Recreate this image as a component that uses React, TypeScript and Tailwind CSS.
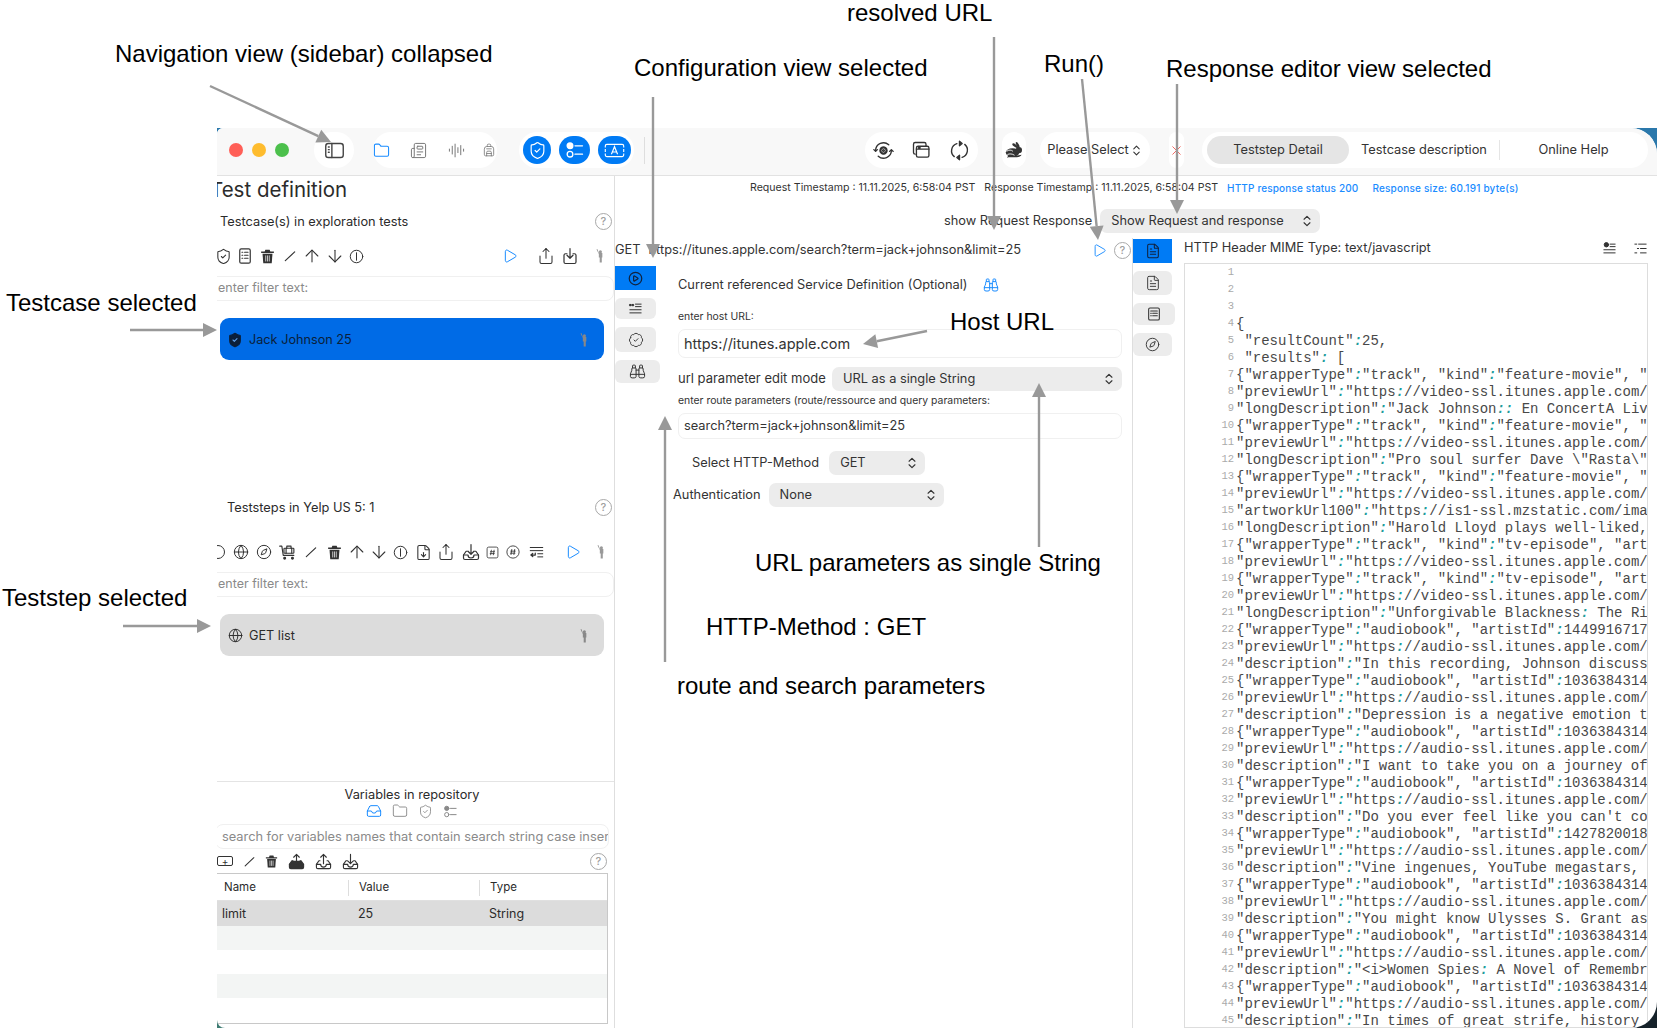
import type { ReactNode } from 'react';
import {
  ArrowDown, ArrowUp, AudioLines, Backpack, BadgeCheck, Binoculars, ChevronsUpDown, CirclePlay, Compass,
  FileDown, FileText, Folder, Globe, Inbox, Newspaper, Play, Share, ShieldCheck, X,
} from 'lucide-react';

type IconProps = { className?: string };

const Svg = ({ className = 'w-[17px] h-[17px]', children }: IconProps & { children: ReactNode }) => (
  <svg viewBox="0 0 24 24" fill="none" stroke="currentColor" strokeWidth={1.6} strokeLinecap="round" strokeLinejoin="round" className={className}>
    {children}
  </svg>
);

const SidebarIcon = ({ className }: IconProps) => (
  <Svg className={className}>
    <rect x="2" y="4" width="20" height="16" rx="3" />
    <path d="M9 4v16" />
    <path d="M5 8h1M5 11h1M5 14h1" />
  </Svg>
);
const CheckList = ({ className }: IconProps) => (
  <Svg className={className}>
    <circle cx="6" cy="7" r="3.4" fill="currentColor" />
    <circle cx="6" cy="17" r="3.4" />
    <path d="M12 7h9M12 17h9" />
  </Svg>
);
const TextBox = ({ className }: IconProps) => (
  <svg viewBox="0 0 30 24" fill="none" stroke="currentColor" strokeWidth={1.5} className={className}>
    <path d="M3 8V6a2 2 0 0 1 2-2h20a2 2 0 0 1 2 2v2M3 16v2a2 2 0 0 0 2 2h20a2 2 0 0 0 2-2v-2M3 10v4M27 10v4" />
    <path d="M11 17l4-10 4 10M12.5 14h5" />
  </svg>
);
const GearCycle = ({ className }: IconProps) => (
  <Svg className={className}>
    <circle cx="12" cy="12" r="3.5" strokeWidth={2.6} strokeDasharray="2 1" />
    <circle cx="12" cy="12" r="1" />
    <path d="M3 12a9 9 0 0 1 15-6.5M21 12a9 9 0 0 1-15 6.5" />
    <path d="M1 11l2 2 2-2M19 13l2-2 2 2" />
  </Svg>
);
const Windows = ({ className }: IconProps) => (
  <Svg className={className}>
    <path d="M5 17a2 2 0 0 1-2-2V5a2 2 0 0 1 2-2h11a2 2 0 0 1 2 2v2" />
    <rect x="6.5" y="7.5" width="15" height="13" rx="2" />
    <path d="M6.5 11h15M9 9.3h2" />
  </Svg>
);
const Cycle = ({ className }: IconProps) => (
  <Svg className={className}>
    <path d="M9 4.2A8.6 8.6 0 0 0 6 19M15 19.8A8.6 8.6 0 0 0 18 5" />
    <path d="M12 1.5v5L15 4zM12 17.5v5L9 20z" fill="currentColor" />
  </Svg>
);
// running hare, side view
const Hare = ({ className }: IconProps) => (
  <svg viewBox="0 0 24 24" className={className}>
    <ellipse cx="9.5" cy="14.5" rx="8.5" ry="5.5" fill="currentColor" />
    <circle cx="17.5" cy="11.5" r="4" fill="currentColor" />
    <ellipse cx="13" cy="6" rx="4.5" ry="1.7" transform="rotate(35 13 6)" fill="currentColor" />
    <ellipse cx="16" cy="5" rx="4" ry="1.5" transform="rotate(60 16 5)" fill="currentColor" />
    <path d="M21 17.5c-1 2-3 3-6 3H6c-2 0-4 .5-4 .5l2-2h8" fill="currentColor" />
    <path d="M2 13c3-2 6-2 8 0M3 17c3-1 6-1 9 1" stroke="#fff" strokeWidth={1.1} fill="none" />
  </svg>
);
const ListDoc = ({ className }: IconProps) => (
  <Svg className={className}>
    <rect x="5" y="2.5" width="14" height="19" rx="2" />
    <path d="M8 7h1M11.5 7H16M8 11h1M11.5 11H16M8 15h1M11.5 15H16" />
  </Svg>
);
const Trash = ({ className }: IconProps) => (
  <svg viewBox="0 0 24 24" className={className}>
    <path d="M3 5h18v2H3zM9 2.5h6l1 2.5H8z" fill="currentColor" />
    <path d="M5 8h14l-1 13.5H6z" fill="currentColor" />
    <path d="M9.5 10.5v8.5M12 10.5v8.5M14.5 10.5v8.5" stroke="#fff" strokeWidth={1} />
  </svg>
);
const Slash = ({ className }: IconProps) => (
  <Svg className={className}><path d="M4 20 20 5" strokeWidth={2} /></Svg>
);
const BarCircle = ({ className }: IconProps) => (
  <Svg className={className}><circle cx="12" cy="12" r="10" /><path d="M12 6v12" /></Svg>
);
const ShareDown = ({ className }: IconProps) => (
  <Svg className={className}>
    <path d="M8 9H6a2 2 0 0 0-2 2v9a2 2 0 0 0 2 2h12a2 2 0 0 0 2-2v-9a2 2 0 0 0-2-2h-2" />
    <path d="M12 2v13M8 11l4 4 4-4" />
  </Svg>
);
const Figure = ({ className = 'w-[14px] h-[16px]' }: IconProps) => (
  <svg viewBox="0 0 14 18" fill="currentColor" className={className}>
    <circle cx="7.5" cy="3.5" r="2" />
    <path d="M2.5 0.5 3.6 0l2 5h4.4v6H9.3v6.5H6.6V11H5.5V6.5z" />
  </svg>
);
const Cart = ({ className }: IconProps) => (
  <Svg className={className}>
    <path d="M1 3h3l2 13h15" />
    <rect x="7" y="6" width="14" height="7" rx="1" />
    <path d="M11 6V3h6v3M10 6v7M18 6v7" />
    <circle cx="8" cy="20" r="1.3" fill="currentColor" />
    <circle cx="19" cy="20" r="1.3" fill="currentColor" />
  </Svg>
);
const TrayArrow = ({ className, up, filled }: IconProps & { up?: boolean; filled?: boolean }) => (
  <Svg className={className}>
    <path d="M7 11H5.5L2 16v4a2 2 0 0 0 2 2h16a2 2 0 0 0 2-2v-4l-3.5-5H17" fill={filled ? 'currentColor' : 'none'} />
    <path d="M2 16h6a4 4 0 0 0 8 0h6" fill={filled ? 'currentColor' : 'none'} />
    {up ? <path d="M12 15V2M8 6l4-4 4 4" /> : <path d="M12 2v13M8 11l4 4 4-4" />}
  </Svg>
);
const HashBox = ({ className }: IconProps) => (
  <svg viewBox="0 0 24 24" fill="none" stroke="currentColor" strokeWidth={1.5} className={className}>
    <rect x="2" y="2" width="20" height="20" rx="3" />
    <path d="M10 7 8.5 17M15 7l-1.5 10M7.5 10.5h9M7 14h9" />
  </svg>
);
const HashCircle = ({ className }: IconProps) => (
  <svg viewBox="0 0 24 24" fill="none" stroke="currentColor" strokeWidth={1.5} className={className}>
    <circle cx="12" cy="12" r="10.5" />
    <path d="M10 7 8.5 17M15 7l-1.5 10M7.5 10.5h9M7 14h9" />
  </svg>
);
const InsertLines = ({ className }: IconProps) => (
  <Svg className={className}>
    <path d="M2 4h20M2 9h20M14 14h8M14 19h8" />
    <path d="M10 13v3H3M6 13.5 3 16l3 2.5" strokeWidth={2} />
  </Svg>
);
const QuoteLines = ({ className }: IconProps) => (
  <Svg className={className}>
    <path d="M3 5.5h2v2H3zM7 5.5h2v2H7z" fill="currentColor" />
    <path d="M12 5h9M12 9h9M3 14h18M3 19h18" />
  </Svg>
);
const Card = ({ className }: IconProps) => (
  <Svg className={className}>
    <rect x="4" y="3" width="16" height="18" rx="2" />
    <path d="M7 7.5h10M7 11h1M10 11h7M7 14.5h1M10 14.5h7" />
  </Svg>
);
const CheckLines = ({ className }: IconProps) => (
  <Svg className={className}>
    <circle cx="7" cy="6" r="3.5" fill="currentColor" />
    <path d="M13 5h8M13 9h8M3 14h18M3 19h18" />
  </Svg>
);
const IndentList = ({ className }: IconProps) => (
  <Svg className={className}><path d="M3 5h3M9 5h12M7 12h2M12 12h9M3 19h3M12 19h9" /></Svg>
);
const Help = ({ className = 'w-[16px] h-[16px]' }: IconProps) => (
  <span className={`flex items-center justify-center rounded-full border-[1.5px] border-[#a8a8a8] text-[11px] font-medium text-[#a0a0a0] ${className}`}>?</span>
);
const Cell = ({ w = 'w-[22.3px]', children }: { w?: string; children: ReactNode }) => (
  <span className={`flex shrink-0 items-center justify-center ${w}`}>{children}</span>
);

const lines = [
  '', '', '', '{', ' "resultCount":25,', ' "results": [',
  '{"wrapperType":"track", "kind":"feature-movie", "a',
  '"previewUrl":"https://video-ssl.itunes.apple.com/i',
  '"longDescription":"Jack Johnson:: En ConcertA Live',
  '{"wrapperType":"track", "kind":"feature-movie", "a',
  '"previewUrl":"https://video-ssl.itunes.apple.com/i',
  '"longDescription":"Pro soul surfer Dave \\"Rasta\\" ',
  '{"wrapperType":"track", "kind":"feature-movie", "a',
  '"previewUrl":"https://video-ssl.itunes.apple.com/i',
  '"artworkUrl100":"https://is1-ssl.mzstatic.com/image',
  '"longDescription":"Harold Lloyd plays well-liked, ',
  '{"wrapperType":"track", "kind":"tv-episode", "artist',
  '"previewUrl":"https://video-ssl.itunes.apple.com/i',
  '{"wrapperType":"track", "kind":"tv-episode", "artist',
  '"previewUrl":"https://video-ssl.itunes.apple.com/i',
  '"longDescription":"Unforgivable Blackness: The Rise',
  '{"wrapperType":"audiobook", "artistId":1449916717, ',
  '"previewUrl":"https://audio-ssl.itunes.apple.com/i',
  '"description":"In this recording, Johnson discusses',
  '{"wrapperType":"audiobook", "artistId":1036384314, ',
  '"previewUrl":"https://audio-ssl.itunes.apple.com/i',
  '"description":"Depression is a negative emotion tha',
  '{"wrapperType":"audiobook", "artistId":1036384314, ',
  '"previewUrl":"https://audio-ssl.itunes.apple.com/i',
  '"description":"I want to take you on a journey of ',
  '{"wrapperType":"audiobook", "artistId":1036384314, ',
  '"previewUrl":"https://audio-ssl.itunes.apple.com/i',
  '"description":"Do you ever feel like you can\'t con',
  '{"wrapperType":"audiobook", "artistId":1427820018, ',
  '"previewUrl":"https://audio-ssl.itunes.apple.com/i',
  '"description":"Vine ingenues, YouTube megastars, In',
  '{"wrapperType":"audiobook", "artistId":1036384314, ',
  '"previewUrl":"https://audio-ssl.itunes.apple.com/i',
  '"description":"You might know Ulysses S. Grant as ',
  '{"wrapperType":"audiobook", "artistId":1036384314, ',
  '"previewUrl":"https://audio-ssl.itunes.apple.com/i',
  '"description":"<i>Women Spies: A Novel of Remembran',
  '{"wrapperType":"audiobook", "artistId":1036384314, ',
  '"previewUrl":"https://audio-ssl.itunes.apple.com/i',
  '"description":"In times of great strife, history is',
];

// colons are highlighted in the editor
const CodeLine = ({ text }: { text: string }) => (
  <>
    {text.split(/(:)/).map((part, i) =>
      part === ':' ? <span key={i} className="font-bold italic text-[#1f9c9c]">:</span> : <span key={i}>{part}</span>
    )}
  </>
);

const arrows: [number, number, number, number][] = [
  [210, 86, 331, 142],
  [653, 97, 653, 258],
  [994, 37, 994, 230],
  [1082, 79, 1098, 240],
  [1177, 84, 1177, 214],
  [130, 330, 217, 330],
  [123, 626, 211, 626],
  [927, 331, 863, 344],
  [1039, 547, 1039, 383],
  [665, 662, 665, 416],
];

const Arrow = ({ from }: { from: [number, number, number, number] }) => {
  const [x1, y1, x2, y2] = from;
  const len = Math.hypot(x2 - x1, y2 - y1);
  const ux = (x2 - x1) / len;
  const uy = (y2 - y1) / len;
  const bx = x2 - ux * 14;
  const by = y2 - uy * 14;
  const pts = `${x2},${y2} ${bx - uy * 7},${by + ux * 7} ${bx + uy * 7},${by - ux * 7}`;
  return (
    <g>
      <line x1={x1} y1={y1} x2={bx} y2={by} stroke="#999" strokeWidth={2.4} />
      <polygon points={pts} fill="#999" />
    </g>
  );
};

const notes: [string, string][] = [
  ['resolved URL', 'left-[847px] top-[0px]'],
  ['Navigation view (sidebar) collapsed', 'left-[115px] top-[41px]'],
  ['Configuration view selected', 'left-[634px] top-[55px]'],
  ['Run()', 'left-[1044px] top-[51px]'],
  ['Response editor view selected', 'left-[1166px] top-[56px]'],
  ['Testcase selected', 'left-[6px] top-[290px]'],
  ['Teststep selected', 'left-[2px] top-[585px]'],
  ['Host URL', 'left-[950px] top-[309px]'],
  ['URL parameters as single String', 'left-[755px] top-[550px]'],
  ['HTTP-Method : GET', 'left-[706px] top-[614px]'],
  ['route and search parameters', 'left-[677px] top-[673px]'],
];

const Field = ({ className, children }: { className: string; children: ReactNode }) => (
  <div className={`flex items-center rounded-[7px] border border-[#f0f0f0] bg-white ${className}`}>{children}</div>
);

const Select = ({ className, label }: { className: string; label: string }) => (
  <div className={`flex items-center justify-between rounded-[7px] bg-[#ececec] pl-[11px] pr-[6px] text-[12.8px] text-[#333] ${className}`}>
    <span>{label}</span>
    <ChevronsUpDown className="h-[14px] w-[14px]" strokeWidth={2} />
  </div>
);

const ToolPill = ({ className, children }: { className: string; children: ReactNode }) => (
  <div className={`flex h-[36px] shrink-0 items-center rounded-[18px] bg-white ${className}`}>{children}</div>
);

const BlueCircle = ({ className, children }: { className: string; children: ReactNode }) => (
  <span className={`flex h-[28px] items-center justify-center rounded-full bg-[#007bf5] text-white ${className}`}>{children}</span>
);

const Toolbar = () => (
  <div className="flex h-[48px] shrink-0 items-center border-b border-[#e2e2e2] bg-[#f8f8f8] pb-[3px] text-[#444]">
    <span className="ml-[12px] h-[14px] w-[14px] rounded-full bg-[#ff5f57]" />
    <span className="ml-[9px] h-[14px] w-[14px] rounded-full bg-[#febc2e]" />
    <span className="ml-[9px] h-[14px] w-[14px] rounded-full bg-[#4cc04c]" />
    <ToolPill className="ml-[25px] w-[40px] justify-center"><SidebarIcon className="h-[21px] w-[21px]" /></ToolPill>
    <ToolPill className="ml-[19px] w-[124px] text-[#777]">
      <Folder className="h-[17px] w-[17px] text-[#1a8cff]" strokeWidth={1.5} />
      <Newspaper className="ml-[20px] h-[17px] w-[17px]" strokeWidth={1.4} />
      <AudioLines className="ml-[21px] h-[17px] w-[17px]" strokeWidth={1.4} />
      <Backpack className="ml-[17px] h-[18px] w-[14px]" strokeWidth={1.4} />
    </ToolPill>
    <ToolPill className="ml-[22px] w-[115px] gap-[8px] pl-[4px]">
      <BlueCircle className="w-[28px]"><ShieldCheck className="h-[19px] w-[19px]" strokeWidth={1.5} /></BlueCircle>
      <BlueCircle className="w-[31px]"><CheckList className="h-[20px] w-[20px]" /></BlueCircle>
      <BlueCircle className="w-[33px]"><TextBox className="h-[19px] w-[23px]" /></BlueCircle>
    </ToolPill>
    <span className="ml-[10px] h-[27px] w-px bg-[#dedede]" />
    <ToolPill className="ml-[220px] w-[113px] text-[#333]">
      <Cell w="w-[37px]"><GearCycle className="h-[21px] w-[21px]" /></Cell>
      <Cell w="w-[38px]"><Windows className="h-[20px] w-[20px]" /></Cell>
      <Cell w="w-[38px]"><Cycle className="h-[21px] w-[21px]" /></Cell>
    </ToolPill>
    <ToolPill className="ml-[24px] w-[24px] justify-center text-[#333]"><Hare className="h-[19px] w-[19px]" /></ToolPill>
    <ToolPill className="ml-[14px] w-[110px] justify-center gap-[1px] text-[12.8px] text-[#333]">
      Please Select<ChevronsUpDown className="h-[13px] w-[13px]" strokeWidth={2} />
    </ToolPill>
    <ToolPill className="ml-[19px] w-[15px] justify-center"><X className="h-[15px] w-[15px] text-[#f0554d]" strokeWidth={1.4} /></ToolPill>
    <ToolPill className="ml-[18px] w-[446px] text-[12.8px] text-[#333]">
      <span className="ml-[5px] flex h-[28px] w-[142px] items-center justify-center rounded-[14px] bg-[#e5e5e5]">Teststep Detail</span>
      <span className="w-[150px] text-center">Testcase description</span>
      <span className="h-[20px] w-px bg-[#e5e5e5]" />
      <span className="w-[147px] text-center">Online Help</span>
    </ToolPill>
  </div>
);

const ItemRow = ({ bg, icon, label, text }: { bg: string; icon: ReactNode; label: string; text: string }) => (
  <div className={`ml-[3px] mt-[17px] flex h-[42px] w-[384px] shrink-0 items-center rounded-[9px] pl-[4px] pt-[1px] text-[12.7px] ${bg} ${text}`}>
    <span className="flex w-[25px] justify-center pr-[3px]">{icon}</span>
    <span>{label}</span>
    <Figure className="ml-auto mr-[14px] h-[14px] w-[12px] text-[#888]" />
  </div>
);

const LeftPane = () => (
  <div className="flex w-[398px] shrink-0 flex-col overflow-hidden border-r border-[#dedede] text-[#2b2b2b]">
    <div className="-ml-[7px] h-[32px] shrink-0 pt-[1px] text-[20.5px] leading-[26px]">Test definition</div>
    <div className="flex h-[26px] shrink-0 items-center justify-between pl-[3px] pr-[2px] text-[12.8px]">
      <span className="mt-[2px]">Testcase(s) in exploration tests</span><Help className="h-[17px] w-[17px]" />
    </div>
    <div className="-ml-[5px] mt-[9px] flex h-[26px] shrink-0 items-center text-[#333]">
      <Cell><ShieldCheck className="h-[17px] w-[17px]" strokeWidth={1.5} /></Cell>
      <Cell><ListDoc className="h-[18px] w-[18px]" /></Cell>
      <Cell><Trash className="h-[17px] w-[17px]" /></Cell>
      <Cell><Slash className="h-[14px] w-[14px]" /></Cell>
      <Cell><ArrowUp className="h-[20px] w-[20px]" strokeWidth={1.3} /></Cell>
      <Cell><ArrowDown className="h-[20px] w-[20px]" strokeWidth={1.3} /></Cell>
      <Cell><BarCircle className="h-[15px] w-[15px]" /></Cell>
      <Cell w="w-[22px] ml-[131px]"><Play className="h-[16px] w-[16px] text-[#1a8cff]" strokeWidth={1.5} /></Cell>
      <Cell w="w-[22px] ml-[14px]"><Share className="h-[18px] w-[18px]" strokeWidth={1.4} /></Cell>
      <Cell w="w-[22px] ml-[2px]"><ShareDown className="h-[18px] w-[18px]" /></Cell>
      <Cell w="w-[14px] ml-[12px]"><Figure className="h-[14px] w-[12px] text-[#999]" /></Cell>
    </div>
    <Field className="-ml-[8px] mt-[7px] h-[25px] shrink-0 rounded-[8px] pl-[8px] text-[12.5px] text-[#8a8a8a]">enter filter text:</Field>
    <ItemRow bg="bg-[#006be6]" text="text-[#0b1f3a]" icon={<ShieldCheck className="h-[16px] w-[16px] fill-[#0b1f3a] text-[#0b1f3a] [&>path:last-child]:stroke-[#5f9fe8]" strokeWidth={1.6} />} label="Jack Johnson 25" />

    <div className="mt-[134px] flex h-[26px] shrink-0 items-center justify-between pl-[10px] pr-[2px] text-[12.8px]">
      <span className="mt-[2px]">Teststeps in Yelp US 5: 1</span><Help className="h-[17px] w-[17px]" />
    </div>
    <div className="-ml-[10px] mt-[19px] flex h-[26px] shrink-0 items-center text-[#333]">
      <Cell w="w-[22.5px]"><span className="h-[14px] w-[14px] rounded-full border-[1.5px] border-[#333]" /></Cell>
      <Cell w="w-[23px]"><Globe className="h-[16px] w-[16px]" strokeWidth={1.5} /></Cell>
      <Cell w="w-[23px]"><Compass className="h-[16px] w-[16px]" strokeWidth={1.5} /></Cell>
      <Cell w="w-[24px]"><Cart className="h-[17px] w-[17px]" /></Cell>
      <Cell w="w-[23px]"><Slash className="h-[14px] w-[14px]" /></Cell>
      <Cell w="w-[23px]"><Trash className="h-[17px] w-[17px]" /></Cell>
      <Cell w="w-[22px]"><ArrowUp className="h-[20px] w-[20px]" strokeWidth={1.3} /></Cell>
      <Cell w="w-[22px]"><ArrowDown className="h-[20px] w-[20px]" strokeWidth={1.3} /></Cell>
      <Cell w="w-[22px]"><BarCircle className="h-[15px] w-[15px]" /></Cell>
      <Cell w="w-[23px]"><FileDown className="h-[17px] w-[17px]" strokeWidth={1.5} /></Cell>
      <Cell w="w-[23px]"><Share className="h-[18px] w-[18px]" strokeWidth={1.4} /></Cell>
      <Cell w="w-[26px]"><TrayArrow className="h-[18px] w-[18px]" /></Cell>
      <Cell w="w-[18px]"><HashBox className="h-[13px] w-[13px]" /></Cell>
      <Cell w="w-[23px]"><HashCircle className="h-[14px] w-[14px]" /></Cell>
      <Cell w="w-[24px]"><InsertLines className="h-[15px] w-[15px]" /></Cell>
      <Cell w="w-[22px] ml-[13px]"><Play className="h-[16px] w-[16px] text-[#1a8cff]" strokeWidth={1.5} /></Cell>
      <Cell w="w-[14px] ml-[10px]"><Figure className="h-[14px] w-[12px] text-[#999]" /></Cell>
    </div>
    <Field className="-ml-[8px] mt-[7px] h-[25px] shrink-0 rounded-[8px] pl-[8px] text-[12.5px] text-[#8a8a8a]">enter filter text:</Field>
    <ItemRow bg="bg-[#dcdcdc]" text="text-[#2b2b2b]" icon={<Globe className="h-[15px] w-[15px]" strokeWidth={1.5} />} label="GET list" />

    <div className="mt-[125px] flex min-h-0 flex-1 flex-col border-t border-[#e4e4e4]">
      <div className="mt-[3px] h-[19px] shrink-0 pr-[7px] text-center text-[12.8px] leading-[20px]">Variables in repository</div>
      <div className="flex h-[14px] shrink-0 items-center justify-center gap-[10px] pr-[8px] text-[#8a8a8a]">
        <Inbox className="h-[16px] w-[16px] text-[#1a8cff]" strokeWidth={1.5} />
        <Folder className="h-[16px] w-[16px]" strokeWidth={1.4} />
        <ShieldCheck className="h-[15px] w-[15px]" strokeWidth={1.4} />
        <CheckList className="h-[15px] w-[15px]" />
      </div>
      <Field className="-ml-[2px] mt-[6px] h-[25px] w-[394px] shrink-0 overflow-hidden whitespace-nowrap rounded-[8px] pl-[6px] text-[12.8px] text-[#8a8a8a]">
        search for variables names that contain search string case inser
      </Field>
      <div className="mt-[2px] flex h-[20px] shrink-0 items-center text-[#333]">
        <Cell w="w-[16px]"><span className="flex h-[10px] w-[16px] items-center justify-center rounded-[2px] border border-[#333] text-[10px] leading-none">+</span></Cell>
        <Cell w="w-[26px] ml-[3px]"><Slash className="h-[13px] w-[13px]" /></Cell>
        <Cell w="w-[18px]"><Trash className="h-[15px] w-[15px]" /></Cell>
        <Cell w="w-[32px]"><TrayArrow up filled className="h-[17px] w-[17px]" /></Cell>
        <Cell w="w-[22px]"><TrayArrow up className="h-[17px] w-[17px]" /></Cell>
        <Cell w="w-[32px]"><TrayArrow className="h-[17px] w-[17px]" /></Cell>
        <Help className="ml-auto mr-[7px] h-[17px] w-[17px]" />
      </div>
      <div className="mt-[2px] h-[151px] w-[391px] shrink-0 border border-l-0 border-[#c8c8c8] text-[12px]">
        <div className="flex h-[27px] items-center border-b border-[#e0e0e0] pt-[2px] text-[11.5px]">
          <span className="w-[131px] pl-[7px]">Name</span>
          <span className="h-[16px] w-px bg-[#ddd]" />
          <span className="w-[130px] pl-[10px]">Value</span>
          <span className="h-[16px] w-px bg-[#ddd]" />
          <span className="pl-[10px]">Type</span>
        </div>
        <div className="flex h-[25px] items-center bg-[#dcdcdc] pt-[1px] text-[12.5px]">
          <span className="w-[132px] pl-[5px]">limit</span>
          <span className="w-[131px] pl-[9px]">25</span>
          <span className="pl-[9px]">String</span>
        </div>
        <div className="h-[24px] bg-[#f3f5f4]" />
        <div className="h-[24px]" />
        <div className="h-[24px] bg-[#f3f5f4]" />
      </div>
    </div>
  </div>
);

const MidPane = () => (
  <div className="flex w-[518px] shrink-0 flex-col border-r border-[#dedede] text-[#333]">
    <div className="flex h-[22px] shrink-0 items-center pt-[2px] text-[12.8px]">
      <span>GET</span>
      <span className="ml-[8px]">https://itunes.apple.com/search?term=jack+johnson&amp;limit=25</span>
      <Play className="ml-auto h-[15px] w-[15px] text-[#1a8cff]" strokeWidth={1.5} />
      <Help className="ml-[7px] mr-[1px] h-[17px] w-[17px]" />
    </div>
    <div className="mt-[6px] flex">
      <div className="flex w-[63px] shrink-0 flex-col">
        <span className="flex h-[24px] w-[41px] items-center justify-center bg-[#007bf5] text-[#10233f]"><CirclePlay className="h-[15px] w-[15px]" strokeWidth={2} /></span>
        <span className="mt-[8px] flex h-[21px] w-[41px] items-center justify-center rounded-[6px] bg-[#ececec]"><QuoteLines className="h-[15px] w-[15px]" /></span>
        <span className="mt-[8px] flex h-[25px] w-[41px] items-center justify-center rounded-[6px] bg-[#ececec]"><BadgeCheck className="h-[16px] w-[16px]" strokeWidth={1.4} /></span>
        <span className="mt-[8px] flex h-[23px] w-[45px] items-center justify-center rounded-[6px] bg-[#ececec]"><Binoculars className="h-[17px] w-[17px]" strokeWidth={1.4} /></span>
      </div>
      <div className="flex w-[444px] shrink-0 flex-col">
        <div className="mt-[9px] flex h-[20px] items-center text-[12.8px]">
          Current referenced Service Definition (Optional)
          <Binoculars className="ml-[15px] h-[16px] w-[16px] text-[#1a8cff]" strokeWidth={1.5} />
        </div>
        <div className="mt-[15px] h-[14px] text-[10.4px] leading-[14px]">enter host URL:</div>
        <Field className="mt-[5px] h-[29px] pl-[5px] text-[14.5px]">https://itunes.apple.com</Field>
        <div className="mt-[9px] flex h-[24px] items-center text-[13px]">
          url parameter edit mode
          <Select className="ml-auto h-[24px] w-[290px]" label="URL as a single String" />
        </div>
        <div className="mt-[3px] h-[14px] text-[10.4px] leading-[14px]">enter route parameters (route/ressource and query parameters:</div>
        <Field className="mt-[5px] h-[26px] pl-[5px] text-[12.8px]">search?term=jack+johnson&amp;limit=25</Field>
        <div className="ml-[14px] mt-[12px] flex h-[24px] items-center text-[12.8px]">
          Select HTTP-Method
          <Select className="ml-[10px] h-[24px] w-[96px]" label="GET" />
        </div>
        <div className="-ml-[5px] mt-[8px] flex h-[24px] items-center text-[12.8px]">
          Authentication
          <Select className="ml-[8px] h-[24px] w-[175px]" label="None" />
        </div>
      </div>
    </div>
  </div>
);

const RightPane = () => (
  <div className="flex min-w-0 flex-1 text-[#333]">
    <div className="flex w-[51px] shrink-0 flex-col pt-[1px]">
      <span className="flex h-[24px] w-[39px] items-center justify-center bg-[#007bf5] text-[#10233f]"><FileText className="h-[16px] w-[16px]" strokeWidth={1.6} /></span>
      <span className="mt-[8px] flex h-[24px] w-[39px] items-center justify-center rounded-[6px] bg-[#ececec]"><FileText className="h-[16px] w-[16px]" strokeWidth={1.4} /></span>
      <span className="mt-[8px] flex h-[22px] w-[42px] items-center justify-center rounded-[6px] bg-[#ececec]"><Card className="h-[16px] w-[16px]" /></span>
      <span className="mt-[8px] flex h-[23px] w-[39px] items-center justify-center rounded-[6px] bg-[#ececec]"><Compass className="h-[15px] w-[15px]" strokeWidth={1.5} /></span>
    </div>
    <div className="flex w-[464px] shrink-0 flex-col">
      <div className="flex h-[25px] shrink-0 items-center justify-between pb-[5px] text-[12.8px]">
        HTTP Header MIME Type: text/javascript
        <span className="flex gap-[16px]">
          <CheckLines className="h-[15px] w-[15px]" />
          <IndentList className="h-[15px] w-[15px]" />
        </span>
      </div>
      <div className="min-h-0 flex-1 overflow-hidden border border-[#dddddd] pt-[1px] font-['Liberation_Mono',monospace] text-[14px] leading-[17px] text-[#484848]">
        {lines.map((line, i) => (
          <div key={i} className="flex h-[17px] whitespace-pre">
            <span className="w-[49px] shrink-0 text-right text-[10.5px] leading-[15px] text-[#aaaaaa]">{i + 1}</span>
            <span className="ml-[2px]"><CodeLine text={line} /></span>
          </div>
        ))}
      </div>
    </div>
  </div>
);

export default function App() {
  return (
    <div className="relative h-[1028px] w-[1657px] overflow-hidden bg-white font-['Inter',sans-serif]">
      <div className="absolute left-[217px] top-[128px] h-[900px] w-[1440px] bg-[linear-gradient(to_bottom,#2b78ab_50%,transparent_50%),linear-gradient(to_right,#3d7b72_5%,#15222a_5%)]">
        <div className="flex h-full flex-col overflow-hidden rounded-bl-[8px] rounded-br-[26px] rounded-tl-[6px] rounded-tr-[26px] bg-white">
          <Toolbar />
          <div className="flex min-h-0 flex-1">
            <LeftPane />
            <div className="flex min-w-0 flex-1 flex-col">
              <div className="flex h-[24px] shrink-0 items-center pl-[135px] text-[10.6px] text-[#333]">
                <span>Request Timestamp : 11.11.2025, 6:58:04 PST</span>
                <span className="ml-[9px]">Response Timestamp : 11.11.2025, 6:58:04 PST</span>
                <span className="ml-[9px] text-[10px] font-medium tracking-[0.15px] text-[#1a8cff]">HTTP response status 200</span>
                <span className="ml-[14px] text-[10px] font-medium tracking-[0.2px] text-[#1a8cff]">Response size: 60.191 byte(s)</span>
              </div>
              <div className="mt-[9px] flex h-[24px] shrink-0 items-center pl-[329px] text-[12.8px] text-[#333]">
                show Request Response
                <Select className="ml-[8px] h-[24px] w-[220px]" label="Show Request and response" />
              </div>
              <div className="mt-[5px] flex min-h-0 flex-1">
                <MidPane />
                <RightPane />
              </div>
            </div>
          </div>
        </div>
      </div>
      <svg className="pointer-events-none absolute left-0 top-0 h-[1028px] w-[1657px]">
        {arrows.map((a, i) => <Arrow key={i} from={a} />)}
      </svg>
      {notes.map(([label, pos]) => (
        <span key={label} className={`absolute whitespace-nowrap font-['Liberation_Sans',sans-serif] text-[24px] leading-[26px] text-black ${pos}`}>{label}</span>
      ))}
    </div>
  );
}
